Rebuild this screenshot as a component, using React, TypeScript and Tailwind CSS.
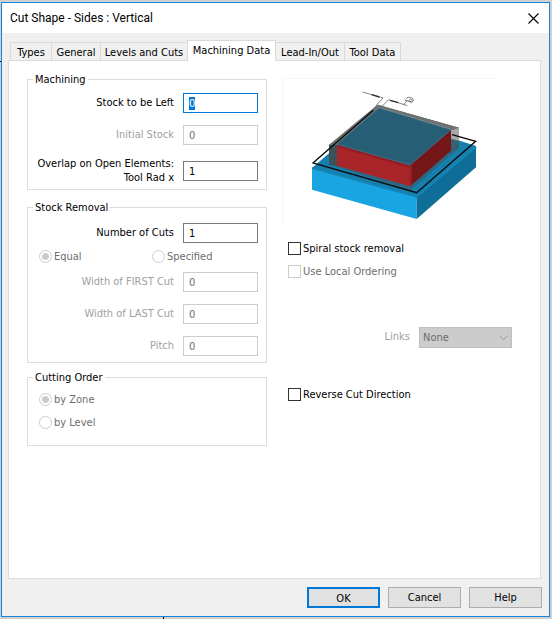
import { useEffect, useRef } from "react";
import type { ReactNode, Ref } from "react";

const tabs = [
  { name: "Types", width: "w-[42px]" },
  { name: "General", width: "w-[50px]" },
  { name: "Levels and Cuts", width: "w-[88px]" },
  { name: "Machining Data", width: "w-[89px]" },
  { name: "Lead-In/Out", width: "w-[70px]" },
  { name: "Tool Data", width: "w-[57px]" },
];

function Group({ title, className, children }: { title: string; className: string; children: ReactNode }) {
  return (
    <fieldset className={`border border-[#dcdcdc] px-2 ${className}`}>
      <legend className="-ml-[3px] h-[15px] px-0.5 leading-[15px] text-black">{title}</legend>
      {children}
    </fieldset>
  );
}

type FieldProps = {
  id: string;
  label: ReactNode;
  value: string;
  disabled?: boolean;
  inputRef?: Ref<HTMLInputElement>;
};

function Field({ id, label, value, disabled, inputRef }: FieldProps) {
  return (
    <div className="flex items-center justify-end gap-[9px]">
      <label
        htmlFor={id}
        className={`text-right leading-[14px] whitespace-nowrap ${disabled ? "text-[#a0a0a0]" : "text-black"}`}
      >
        {label}
      </label>
      <input
        id={id}
        ref={inputRef}
        type="text"
        defaultValue={value}
        disabled={disabled}
        className="h-5 w-[75px] shrink-0 border border-[#7a7a7a] bg-white px-[5px] leading-[13px] text-black outline-none selection:bg-[#0078d7] selection:text-white focus:border-[#0078d7] disabled:border-[#cccccc] disabled:text-[#6d6d6d]"
      />
    </div>
  );
}

function Radio({ name, label, checked }: { name: string; label: string; checked?: boolean }) {
  return (
    <label className="flex h-[15px] items-center gap-0.5 text-[#6d6d6d]">
      <input
        type="radio"
        name={name}
        defaultChecked={checked}
        disabled
        className="size-[13px] appearance-none rounded-full border border-[#cccccc] bg-white checked:bg-[radial-gradient(circle,#cccccc_3px,#ffffff_4px)]"
      />
      <span className="pt-0.5">{label}</span>
    </label>
  );
}

function CheckBox({ label, disabled }: { label: string; disabled?: boolean }) {
  return (
    <label className={`flex h-[15px] items-center gap-0.5 ${disabled ? "text-[#6d6d6d]" : "text-black"}`}>
      <input
        type="checkbox"
        disabled={disabled}
        className="size-[13px] appearance-none border border-[#333333] bg-white checked:bg-[#333333] disabled:border-[#cccccc]"
      />
      <span className="pt-0.5">{label}</span>
    </label>
  );
}

// Stock block on its base with the tool path around it
function StockPreview() {
  return (
    <svg viewBox="21 9 642 441" className="h-[147px] w-[214px]" aria-label="Machining preview">
      <path d="M22 450V10H663" fill="none" stroke="#f4f4f4" strokeWidth="3" />
      {/* base */}
      <path d="M111 279L300 115L603 213L425 370Z" fill="#1580ae" />
      <path d="M111 279L425 363V432L111 344Z" fill="#19a5e1" />
      <path d="M425 363L603 213V277L425 432Z" fill="#0f6e98" />
      <path d="M111 279L425 365L603 215" fill="none" stroke="#1684b4" strokeWidth="6" />
      {/* remaining stock */}
      <path d="M162 210L308 89L552 158V218L405 347L162 268Z" fill="#2d6781" />
      <path d="M162 210L186 208V274L162 270Z" fill="#3d515a" />
      <path d="M162 210L308 89L552 158L528 166L312 99L186 209Z" fill="#707070" />
      <path d="M528 166L552 158V198L528 204Z" fill="#a7a7a7" />
      <path d="M528 192L552 197V220L528 232Z" fill="#36606f" />
      <path d="M312 98L528 163" fill="none" stroke="#909090" strokeWidth="3" />
      {/* part */}
      <path d="M186 208L405 270V334L186 272Z" fill="#aa2529" />
      <path d="M405 270L528 164V227L405 334Z" fill="#751719" />
      <path d="M186 208L405 270V279L186 216Z" fill="#921e23" />
      <path d="M405 270L411 265V328L405 334Z" fill="#911e21" />
      <path d="M312 99L528 164L405 270L186 208Z" fill="#265e76" stroke="#477b90" strokeWidth="2" />
      {/* tool path */}
      <path d="M295 106L114 264L425 353L602 199L531 179" fill="none" stroke="#0b0b0b" strokeWidth="4" />
      {/* offset dimension */}
      <g fill="none" stroke="#444444" strokeWidth="2">
        <path d="M263 51L324 69L303 92M397 92L341 74L318 97" />
        <path d="M290 59L313 66M345 76L370 83" stroke="#333333" strokeWidth="4" />
        <path d="M386 89L397 76M393 71C398 63 417 68 415 77C411 86 399 80 404 74C407 70 414 73 411 79M388 75L410 81" />
      </g>
    </svg>
  );
}

export default function App() {
  const stockRef = useRef<HTMLInputElement>(null);

  useEffect(() => {
    stockRef.current?.focus();
    stockRef.current?.select();
  }, []);

  const buttonStyle = "h-[21px] w-[73px] bg-[#e1e1e1] pt-0.5 text-black";

  return (
    <div className="relative flex min-h-screen flex-col bg-[#d0d0d0] pt-0.5 pr-0.5 pb-0.5 pl-px font-['DejaVu_Sans_Condensed','DejaVu_Sans',sans-serif] text-[11px]">
      {/* lines of the drawing behind the dialog */}
      <span className="absolute top-[61px] left-0 h-px w-px bg-black" />
      <span className="absolute bottom-0 left-[163px] h-0.5 w-px bg-black" />

      <div className="flex flex-1 flex-col border border-[#1883d7] bg-[#f0f0f0]">
        <header className="flex h-[30px] items-center justify-between bg-white pr-2.5 pl-2 text-black">
          <h1 className="font-[Roboto,sans-serif] text-[12px]">Cut Shape - Sides : Vertical</h1>
          <button type="button" aria-label="Close" className="size-[11px]">
            <svg viewBox="0 0 11 11" className="size-[11px]">
              <path d="M0.5 0.5L10.5 10.5M10.5 0.5L0.5 10.5" stroke="#000000" strokeWidth="1.1" />
            </svg>
          </button>
        </header>

        <main className="flex flex-1 flex-col pt-[7px] pr-2 pl-1.5">
          <div role="tablist" className="flex h-5 items-end pl-0.5">
            {tabs.map((tab) => {
              const selected = tab.name === "Machining Data";
              return (
                <button
                  key={tab.name}
                  type="button"
                  role="tab"
                  aria-selected={selected}
                  className={`-mr-px shrink-0 border border-b-0 border-[#d9d9d9] whitespace-nowrap text-black ${tab.width} ${
                    selected ? "z-10 -mb-px h-[21px] bg-white" : "h-[18px] bg-[#f0f0f0] pt-0.5"
                  }`}
                >
                  {tab.name}
                </button>
              );
            })}
          </div>

          <div
            role="tabpanel"
            className="grid flex-1 grid-cols-[240px_1fr] content-start gap-[15px] border border-[#dcdcdc] bg-white pt-[11px] pl-[18px]"
          >
            <div>
              <Group title="Machining" className="pb-1">
                <div className="flex flex-col gap-3 pt-1.5">
                  <Field id="stock-left" label="Stock to be Left" value="0" inputRef={stockRef} />
                  <Field id="initial-stock" label="Initial Stock" value="0" disabled />
                  <Field
                    id="overlap"
                    label={
                      <>
                        Overlap on Open Elements:
                        <br />
                        Tool Rad x
                      </>
                    }
                    value="1"
                  />
                </div>
              </Group>

              <Group title="Stock Removal" className="mt-2.5 pb-1.5">
                <div className="pt-2">
                  <Field id="cuts" label="Number of Cuts" value="1" />
                </div>
                <div className="grid grid-cols-[113px_1fr] pt-1.5 pb-2 pl-[3px]">
                  <Radio name="cut-width" label="Equal" checked />
                  <Radio name="cut-width" label="Specified" />
                </div>
                <div className="flex flex-col gap-3">
                  <Field id="first-cut" label="Width of FIRST Cut" value="0" disabled />
                  <Field id="last-cut" label="Width of LAST Cut" value="0" disabled />
                  <Field id="pitch" label="Pitch" value="0" disabled />
                </div>
              </Group>

              <Group title="Cutting Order" className="mt-[7px] pb-[15px]">
                <div className="flex flex-col gap-2 pt-[7px] pl-[3px]">
                  <Radio name="order" label="by Zone" checked />
                  <Radio name="order" label="by Level" />
                </div>
              </Group>
            </div>

            <div className="pt-1.5">
              <StockPreview />
              <div className="flex flex-col gap-2 pt-4 pl-1.5">
                <CheckBox label="Spiral stock removal" />
                <CheckBox label="Use Local Ordering" disabled />
              </div>
              <div className="mt-12 flex items-center justify-end gap-[9px] pr-7">
                <label htmlFor="links" className="text-[#a0a0a0]">
                  Links
                </label>
                <div className="relative h-[21px] w-[93px]">
                  <select
                    id="links"
                    disabled
                    className="h-[21px] w-full appearance-none border border-[#bfbfbf] bg-[#cccccc] px-[3px] pt-0.5 text-[#6d6d6d] disabled:opacity-100"
                  >
                    <option>None</option>
                  </select>
                  <svg viewBox="0 0 9 5" className="absolute top-2 right-1 h-[5px] w-[9px]">
                    <path d="M0.5 0.5L4.5 4.5L8.5 0.5" fill="none" stroke="#9a9a9a" />
                  </svg>
                </div>
              </div>
              <div className="mt-[39px] pl-1.5">
                <CheckBox label="Reverse Cut Direction" />
              </div>
            </div>
          </div>
        </main>

        <footer className="flex justify-end gap-2 pt-2 pr-[7px] pb-2">
          <button type="button" className={`${buttonStyle} border-2 border-[#0078d7]`}>
            OK
          </button>
          <button type="button" className={`${buttonStyle} border border-[#adadad]`}>
            Cancel
          </button>
          <button type="button" className={`${buttonStyle} border border-[#adadad]`}>
            Help
          </button>
        </footer>
      </div>
    </div>
  );
}
